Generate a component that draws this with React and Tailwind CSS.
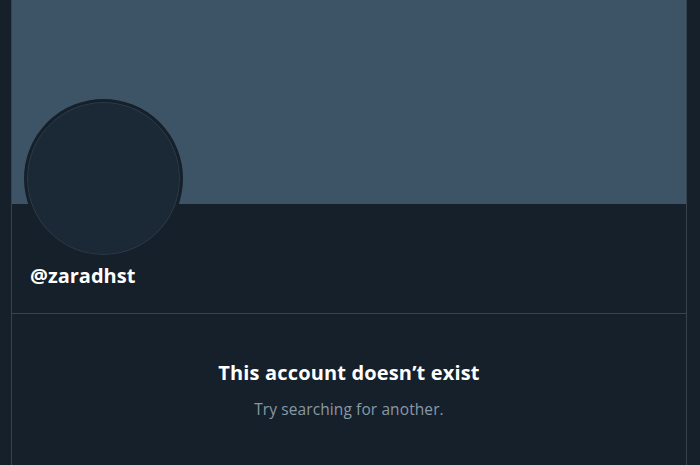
export default function App() {
  return (
    <div className="w-[700px] h-[465px] bg-[#15202b] overflow-hidden flex" style={{ fontFamily: '"Open Sans", "Noto Sans", sans-serif' }}>
      <div className="w-[11px] shrink-0" />
      <div className="w-[676px] shrink-0 border-x border-[#38444d] flex flex-col">
        <div className="h-[204px] bg-[#3d5466] shrink-0" />
        <div className="pl-[12px] -mt-[105px] relative">
          <div className="w-[159px] h-[159px] rounded-full bg-[#1b2836] border-[3px] border-[#15202b] shadow-[inset_0_0_0_1px_#2c3a47]" />
        </div>
        <div className="pl-[18px] pt-[6px] h-[55px] text-[20px] font-bold text-white leading-[24px]">@zaradhst</div>
        <div className="border-t border-[#38444d] flex flex-col items-center pt-[46px]">
          <div className="text-[20px] font-bold text-white leading-[26px] tracking-[0.15px]">This account doesn’t exist</div>
          <div className="mt-[13px] text-[15.5px] text-[#8899a6] leading-[20px] tracking-[0.1px]">Try searching for another.</div>
        </div>
      </div>
    </div>
  );
}
